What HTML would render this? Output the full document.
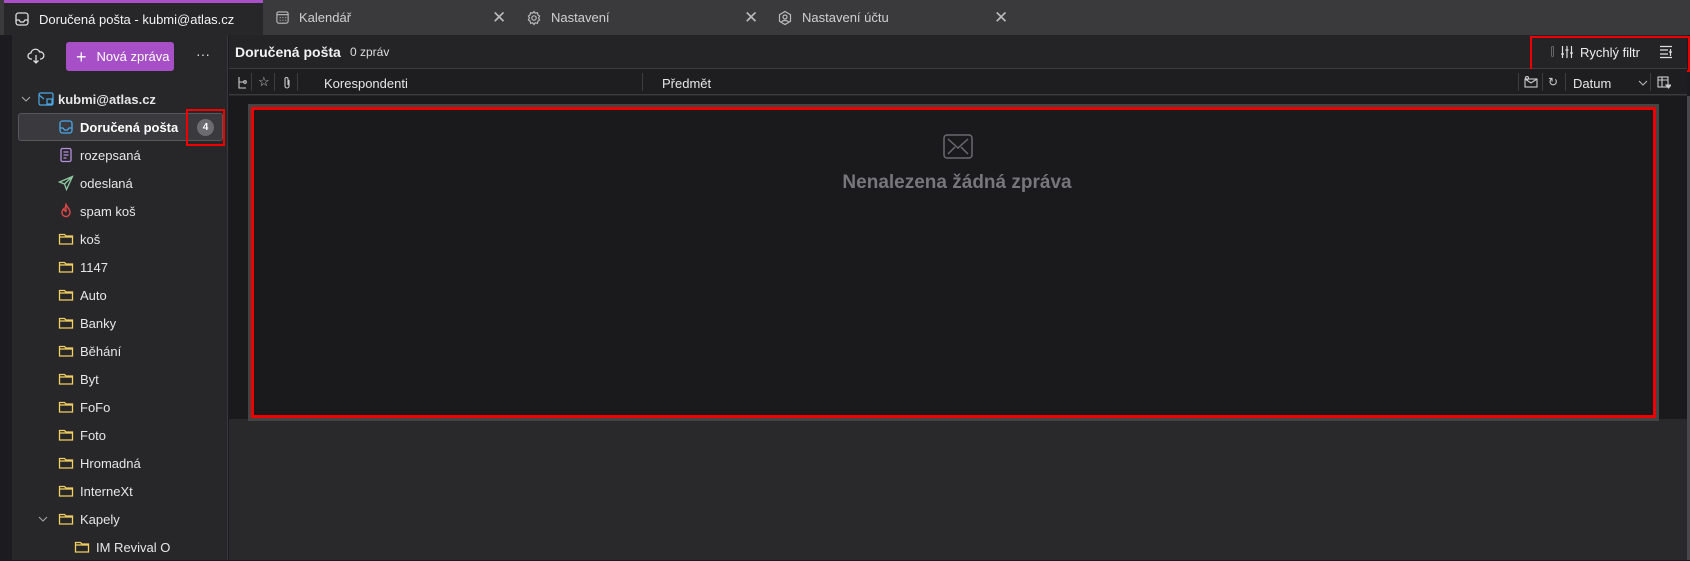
<!DOCTYPE html>
<html><head><meta charset="utf-8"><style>
*{box-sizing:border-box;margin:0;padding:0}
body{width:1690px;height:560px;overflow:hidden;background:#1c1b1f;font-family:"Liberation Sans",sans-serif;font-size:13px;color:#e6e6e8;position:relative}
.abs{position:absolute}
.tabbar{left:0;top:0;width:1690px;height:35px;background:#3a3a3d}
.tab{top:0;height:35px;display:flex;align-items:center;color:#d0d0d2;font-size:13px}
.active{left:4px;width:259px;background:#27272a;border-top:3px solid #a950c9;color:#f3f3f3}
.side{left:12px;top:35px;width:216px;height:525px;background:#27272a;border-right:1px solid #38383b}
.strip{left:0;top:35px;width:12px;height:525px;background:#1c1b1f}
.main{left:229px;top:35px;width:1458px;height:525px;background:#29292c}
.item{left:12px;height:28px;display:flex;align-items:center;width:216px}
.item span{position:absolute;left:68px}
.item svg{position:absolute;left:46px}
.hdr{left:229px;top:35px;width:1458px;height:34px;background:#242427;border-bottom:1px solid #3d3d40}
.cols{left:229px;top:69px;width:1458px;height:26px;background:#1e1e21;border-bottom:1px solid #3a3a3d;color:#d8d8da;font-size:12.5px}
.sep{top:4px;width:1px;height:18px;background:#3d3d40}
.empty{left:229px;top:96px;width:1458px;height:323px;background:#1a1a1d}
</style></head><body>
<div class="abs tabbar"></div>
<div class="abs tab active"><svg style="margin-left:10px" width="16" height="16" viewBox="0 0 16 16" fill="none" stroke="#ddd" stroke-width="1.3"><rect x="2" y="2" width="12" height="12" rx="2.5"/><path d="M2 9h3l1.5 2h3L11 9h3"/></svg><span style="margin-left:9px">Doručená pošta - kubmi@atlas.cz</span></div>
<div class="abs tab" style="left:275px"><svg width="15" height="15" viewBox="0 0 16 16" fill="none" stroke="#bbb" stroke-width="1.2"><rect x="2" y="2" width="12" height="12" rx="2"/><path d="M2 5h12M5 8h1M8 8h1M11 8h1M5 11h1M8 11h1M11 11h1"/></svg><span style="margin-left:9px">Kalendář</span></div>
<div class="abs tab" style="left:492px;font-size:17px;color:#bbb">✕</div>
<div class="abs tab" style="left:526px"><svg width="16" height="16" viewBox="0 0 16 16" fill="none" stroke="#bbb" stroke-width="1.2"><circle cx="8" cy="8" r="2.2"/><path d="M8 1.5l1.3 1.7 2.1-.5.5 2.1 1.7 1.3-1 1.9 1 1.9-1.7 1.3-.5 2.1-2.1-.5L8 14.5l-1.3-1.7-2.1.5-.5-2.1L2.4 9.9l1-1.9-1-1.9 1.7-1.3.5-2.1 2.1.5z"/></svg><span style="margin-left:9px">Nastavení</span></div>
<div class="abs tab" style="left:744px;font-size:17px;color:#bbb">✕</div>
<div class="abs tab" style="left:777px"><svg width="16" height="16" viewBox="0 0 16 16" fill="none" stroke="#bbb" stroke-width="1.2"><path d="M8 1.5l5.5 3.2v6.6L8 14.5l-5.5-3.2V4.7z"/><circle cx="8" cy="7" r="2"/><path d="M4.5 12c1-2 6-2 7 0"/></svg><span style="margin-left:9px">Nastavení účtu</span></div>
<div class="abs tab" style="left:994px;font-size:17px;color:#bbb">✕</div>

<div class="abs strip"></div>
<div class="abs side"></div>
<svg class="abs" style="left:27px;top:47px" width="18" height="18" viewBox="0 0 18 18" fill="none" stroke="#ddd" stroke-width="1.3"><path d="M5 12H4a3 3 0 010-6 4.5 4.5 0 018.6-1A3 3 0 0114 12h-1"/><path d="M9 8v8M6.5 13.5L9 16l2.5-2.5"/></svg>
<div class="abs" style="left:66px;top:42px;width:108px;height:29px;background:#a64fc6;border-radius:3px;color:#fff;display:flex;align-items:center;font-size:13px"><span style="font-size:18px;margin:0 10px 0 10px;line-height:1">+</span>Nová zpráva</div>
<div class="abs" style="left:196px;top:46px;color:#ddd;font-size:14px">···</div>

<svg class="abs" style="left:21px;top:94px" width="10" height="10" viewBox="0 0 10 10" fill="none" stroke="#aaa"><path d="M1 3l4 4 4-4"/></svg>
<svg class="abs" style="left:38px;top:91px" width="17" height="16" viewBox="0 0 17 16" fill="none" stroke="#4aa8e8" stroke-width="1.2"><rect x="1" y="2" width="14" height="12" rx="1.5"/><path d="M1 4l5 4"/><rect x="9" y="8" width="5" height="5" fill="#27272a"/></svg>
<div class="abs" style="left:58px;top:92px;font-weight:bold">kubmi@atlas.cz</div>

<div class="abs" style="left:18px;top:113px;width:205px;height:28px;background:#3a3a3e;border:1px solid #58585c;border-radius:3px"></div>
<div class="abs" style="left:186px;top:109px;width:39px;height:37px;border:2px solid #e00"></div>
<div class="abs" style="left:197px;top:119px;width:17px;height:17px;border-radius:50%;background:#6b6b70;color:#fff;font-size:10px;font-weight:bold;text-align:center;line-height:17px">4</div>

<div class="abs item" style="top:113px"><svg width="16" height="16" viewBox="0 0 16 16" fill="none" stroke="#4aa8e8" stroke-width="1.3"><rect x="2" y="2" width="12" height="12" rx="2.5"/><path d="M2 9h3l1.5 2h3L11 9h3"/></svg><span style="font-weight:bold;color:#fff">Doručená pošta</span></div>
<div class="abs item" style="top:141px"><svg width="16" height="16" viewBox="0 0 16 16" fill="none" stroke="#b890e0" stroke-width="1.3"><rect x="3" y="1.5" width="10" height="13" rx="1.5"/><path d="M5.5 5h5M5.5 8h5M5.5 11h3"/></svg><span>rozepsaná</span></div>
<div class="abs item" style="top:169px"><svg width="16" height="16" viewBox="0 0 16 16" fill="none" stroke="#8fc8a0" stroke-width="1.3"><path d="M14.5 1.5L1.5 7l5 2 2 5.5zM6.5 9l8-7.5"/></svg><span>odeslaná</span></div>
<div class="abs item" style="top:197px"><svg width="16" height="16" viewBox="0 0 16 16" fill="none" stroke="#e04848" stroke-width="1.4"><path d="M8 1.5c1 3 4 4 4 8a4 4 0 01-8 0c0-2 1-3 2-4 0 2 1 2.5 2 3 .5-2-1-4 0-7z"/></svg><span>spam koš</span></div>
<div id="folders"></div>
<script>
var f=[["koš",225],["1147",253],["Auto",281],["Banky",309],["Běhání",337],["Byt",365],["FoFo",393],["Foto",421],["Hromadná",449],["InterneXt",477],["Kapely",505]];
var ic='<svg width="16" height="16" viewBox="0 0 16 16" fill="none" stroke="#f0d060" stroke-width="1.3"><path d="M1.5 3.5h5l1.5 1.5h6.5v8h-13z"/><path d="M1.5 6h13"/></svg>';
var h='';f.forEach(function(x){h+='<div class="abs item" style="top:'+x[1]+'px">'+ic+'<span>'+x[0]+'</span></div>'});
h+='<div class="abs item" style="top:533px"><svg style="left:62px" width="16" height="16" viewBox="0 0 16 16" fill="none" stroke="#f0d060" stroke-width="1.3"><path d="M1.5 3.5h5l1.5 1.5h6.5v8h-13z"/><path d="M1.5 6h13"/></svg><span style="left:84px">IM Revival O</span></div>';
document.getElementById('folders').innerHTML=h;
</script>
<svg class="abs" style="left:38px;top:514px" width="10" height="10" viewBox="0 0 10 10" fill="none" stroke="#aaa"><path d="M1 3l4 4 4-4"/></svg>

<div class="abs main"></div>
<div class="abs hdr"></div>
<div class="abs" style="left:235px;top:44px;font-size:14px;font-weight:bold;color:#f2f2f2">Doručená pošta</div>
<div class="abs" style="left:350px;top:45px;font-size:12px;color:#ddd">0 zpráv</div>
<div class="abs" style="left:1530px;top:36px;width:160px;height:36px;border:2px solid #e00"></div>
<div class="abs" style="left:1551px;top:46px;width:3px;height:11px;border:1px solid #666;border-radius:2px"></div>
<svg class="abs" style="left:1560px;top:45px" width="14" height="14" viewBox="0 0 14 14" fill="none" stroke="#ddd" stroke-width="1.2"><path d="M2.5 1v12M7 1v12M11.5 1v12"/><path d="M1 9h3M5.5 5h3M10 8h3"/></svg>
<div class="abs" style="left:1580px;top:45px;font-size:13px;color:#eee">Rychlý filtr</div>
<svg class="abs" style="left:1659px;top:45px" width="14" height="14" viewBox="0 0 14 14" fill="none" stroke="#ddd" stroke-width="1.2"><path d="M1 1.5h12M1 12.5h12M1 5h8M1 9h8M11.5 4v7M10 7h3"/></svg>

<div class="abs cols"></div>
<svg class="abs" style="left:236px;top:76px" width="12" height="14" viewBox="0 0 12 14" fill="none" stroke="#ccc" stroke-width="1.1"><path d="M3 1v11h7M3 6h5"/><circle cx="9" cy="6" r="1.3"/></svg>
<div class="abs sep" style="left:251px;top:73px"></div>
<div class="abs" style="left:258px;top:74px;font-size:13px;color:#ccc">☆</div>
<div class="abs sep" style="left:274px;top:73px"></div>
<svg class="abs" style="left:282px;top:76px" width="10" height="14" viewBox="0 0 10 14" fill="none" stroke="#ccc" stroke-width="1.1"><path d="M7 4v6a2 2 0 01-4 0V3a1.4 1.4 0 013 0v6"/></svg>
<div class="abs sep" style="left:297px;top:73px"></div>
<div class="abs" style="left:324px;top:76px">Korespondenti</div>
<div class="abs sep" style="left:642px;top:73px"></div>
<div class="abs" style="left:662px;top:76px">Předmět</div>
<div class="abs sep" style="left:1518px;top:73px"></div>
<svg class="abs" style="left:1524px;top:76px" width="14" height="12" viewBox="0 0 14 12" fill="none" stroke="#ccc" stroke-width="1.1"><rect x="1" y="3" width="12" height="8"/><path d="M1 3l6 4 6-4"/><circle cx="3" cy="2" r="1.5"/></svg>
<div class="abs sep" style="left:1542px;top:73px"></div>
<div class="abs" style="left:1548px;top:75px;color:#ccc;font-size:12px">↻</div>
<div class="abs sep" style="left:1565px;top:73px"></div>
<div class="abs" style="left:1573px;top:76px">Datum</div>
<svg class="abs" style="left:1638px;top:79px" width="10" height="8" viewBox="0 0 10 8" fill="none" stroke="#bbb"><path d="M1 2l4 4 4-4"/></svg>
<div class="abs sep" style="left:1650px;top:73px"></div>
<svg class="abs" style="left:1657px;top:76px" width="14" height="13" viewBox="0 0 14 13" fill="none" stroke="#ccc" stroke-width="1.1"><rect x="1" y="1" width="10" height="10"/><path d="M1 4h10M5 1v10"/><path d="M9 9h5l-2.5 3z" fill="#ccc"/></svg>

<div class="abs empty"></div>
<div class="abs" style="left:251px;top:107px;width:1405px;height:311px;border:3px solid #e00;box-shadow:0 0 0 3px #444"></div>
<svg class="abs" style="left:943px;top:134px" width="30" height="25" viewBox="0 0 30 25" fill="none" stroke="#6a6a6e" stroke-width="1.5"><rect x="1" y="1" width="28" height="23" rx="3"/><path d="M5 5l10 9 10-9M5 20l7-7M25 20l-7-7"/></svg>
<div class="abs" style="left:757px;top:172px;width:400px;text-align:center;font-size:19px;font-weight:bold;color:#77777b">Nenalezena žádná zpráva</div>
<div class="abs" style="left:1687px;top:96px;width:3px;height:464px;background:#48484c"></div>
</body></html>
